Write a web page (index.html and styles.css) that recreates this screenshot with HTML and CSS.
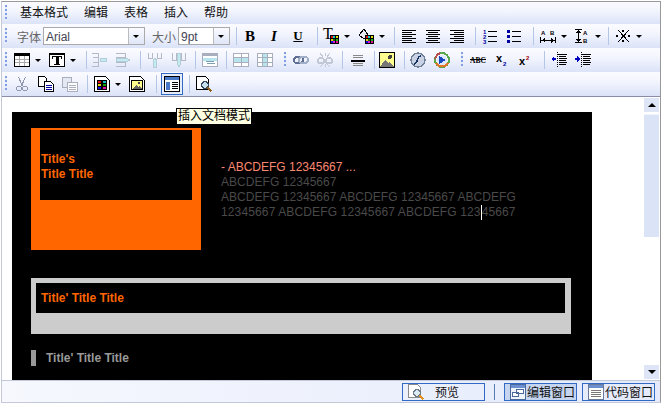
FILE: index.html
```html
<!doctype html>
<html lang="zh-CN">
<head>
    <meta charset="utf-8"/>
    <title>编辑器</title>
    <link rel="stylesheet" href="styles.css">
</head>
<body>

<svg class="defs" xmlns="http://www.w3.org/2000/svg">
    <symbol id="i-colors" viewBox="0 0 16 16">
        <path fill="#000" d="M7 7h9v9H7z"/>
        <path fill="#e01010" d="M8 8h2v2H8z"/><path fill="#10d0d0" d="M10 8h2v2h-2z"/><path fill="#e0e010" d="M13 8h2v2h-2z"/>
        <path fill="#f0d000" d="M8 11h2v2H8z"/><path fill="#107010" d="M10 11h2v2h-2z"/><path fill="#10c010" d="M13 11h2v2h-2z"/>
        <path fill="#1010e0" d="M8 13h2v2H8z"/><path fill="#e010e0" d="M10 13h2v2h-2z"/><path fill="#e01090" d="M13 13h2v2h-2z"/>
    </symbol>
    <symbol id="i-table" viewBox="0 0 16 16">
        <path fill="#fff" stroke="#000" d="M.5 1.500h15v13H.5z"/>
        <path fill="#000" d="M0 1h16v3H0z"/>
        <path stroke="#aaa" d="M1 7.500h14M1 10.500h14M5.500 4v10M10.500 4v10"/>
    </symbol>
    <symbol id="i-textbox" viewBox="0 0 16 16">
        <path fill="#fff" stroke="#000" d="M.5 1.500h15v13H.5z"/>
        <path fill="#000" d="M0 1h16v2H0z"/>
        <path fill="#000" d="M3 4h10v3h-1V5H9.500v7H11v1H5v-1h1.500V5H4v2H3z"/>
    </symbol>
    <symbol id="i-alignl" viewBox="0 0 16 16"><path stroke="#000" d="M1 2.500h14M1 4.500h10M1 6.500h14M1 8.500h10M1 10.500h14M1 12.500h10M1 14.500h14"/></symbol>
    <symbol id="i-alignc" viewBox="0 0 16 16"><path stroke="#000" d="M1 2.500h14M3 4.500h10M1 6.500h14M3 8.500h10M1 10.500h14M3 12.500h10M1 14.500h14"/></symbol>
    <symbol id="i-alignr" viewBox="0 0 16 16"><path stroke="#000" d="M1 2.500h14M5 4.500h10M1 6.500h14M5 8.500h10M1 10.500h14M5 12.500h10M1 14.500h14"/></symbol>
    <symbol id="i-ol" viewBox="0 0 16 16">
        <text class="tiny" x="1" y="6" fill="#0000a0">1</text><text class="tiny" x="1" y="11" fill="#0000a0">2</text><text class="tiny" x="1" y="16" fill="#0000a0">3</text>
        <path stroke="#000" d="M6 3.500h9M6 8.500h9M6 13.500h9"/>
    </symbol>
    <symbol id="i-ul" viewBox="0 0 16 16">
        <path fill="#0000a0" d="M1 2h3v3H1zM1 7h3v3H1zM1 12h3v3H1z"/>
        <path stroke="#000" d="M6 3.500h9M6 8.500h9M6 13.500h9"/>
    </symbol>
    <symbol id="i-hspace" viewBox="0 0 16 16">
        <text class="tiny" x="1" y="7" fill="#000">A</text><text class="tiny" x="10" y="7" fill="#000">B</text>
        <path stroke="#000" d="M.5 9v6M15.500 9v6M1 12.500h14"/><path fill="#000" d="M2 12l3-2v5zM14 12l-3-2v5z"/>
    </symbol>
    <symbol id="i-vspace" viewBox="0 0 16 16">
        <text class="tiny" x="9" y="7" fill="#000">A</text><text class="tiny" x="9" y="15" fill="#000">B</text>
        <path stroke="#000" d="M1 1.500h7M1 14.500h7M4.500 2v12"/><path fill="#000" d="M4 2L2 5h5zM4 14l-2-3h5z"/>
    </symbol>
    <symbol id="i-clear" viewBox="0 0 16 16">
        <path stroke="#000" d="M3 2l11 12M14 2L3 14"/>
        <path fill="#000" d="M1 7h2v2H1zM13 7h2v2h-2zM7 2h2v2H7zM7 12h2v2H7z"/>
    </symbol>
    <symbol id="i-splitl" viewBox="0 0 16 16">
        <path fill="none" stroke="#b4b9c8" d="M1 1.500h6v4H2M1 14.500h6v-4H2M7.500 5v6"/>
        <path fill="#c4eaf2" stroke="#b4ccd6" d="M15 6.500h-5L9 8l1 1.500h5z"/>
    </symbol>
    <symbol id="i-splitr" viewBox="0 0 16 16">
        <path fill="none" stroke="#b4b9c8" d="M1 1.500h9v4H1M1 14.500h9v-4H1"/>
        <path fill="#c4eaf2" stroke="#b4ccd6" d="M1 6.500h11L15 8l-3 1.500H1z"/>
    </symbol>
    <symbol id="i-splitu" viewBox="0 0 16 16">
        <path fill="none" stroke="#b4b9c8" d="M1.500 1v5h4V1M14.500 1v5h-4V1"/>
        <path fill="#c4eaf2" stroke="#b4ccd6" d="M6.500 15V8L8 6l1.500 2v7z"/>
    </symbol>
    <symbol id="i-splitd" viewBox="0 0 16 16">
        <path fill="none" stroke="#b4b9c8" d="M1.500 1v7h4V1M14.500 1v7h-4V1"/>
        <path fill="#c4eaf2" stroke="#b4ccd6" d="M6.500 1v11L8 15l1.500-3V1z"/>
    </symbol>
    <symbol id="i-tmove" viewBox="0 0 16 16">
        <path fill="#fff" stroke="#a8aebe" d="M.5 1.500h15v13H.5z"/>
        <path fill="#a8aebe" d="M1 2h14v2H1z"/>
        <path fill="#b8e4ee" d="M1 6h14v3H1z"/>
        <path stroke="#7fa0b0" d="M4 9.500h8M5 11.500h8"/>
    </symbol>
    <symbol id="i-trow" viewBox="0 0 16 16">
        <path fill="#fff" stroke="#a8aebe" d="M.5 1.500h15v13H.5z"/>
        <path fill="#b8e4ee" d="M1 6h14v4H1z"/>
        <path stroke="#a8aebe" d="M1 5.500h14M1 10.500h14M8.500 2v12"/>
    </symbol>
    <symbol id="i-tcol" viewBox="0 0 16 16">
        <path fill="#fff" stroke="#a8aebe" d="M.5 1.500h15v13H.5z"/>
        <path fill="#b8e4ee" d="M6 2h5v12H6z"/>
        <path stroke="#a8aebe" d="M1 5.500h14M1 10.500h14M5.500 2v12M10.500 2v12"/>
    </symbol>
    <symbol id="i-link" viewBox="0 0 16 16">
        <rect x="1" y="5" width="9" height="6" rx="3" fill="none" stroke="#5f6f94" stroke-width="2"/>
        <rect x="6" y="5" width="9" height="6" rx="3" fill="none" stroke="#a0aec8" stroke-width="2"/>
    </symbol>
    <symbol id="i-unlink" viewBox="0 0 16 16">
        <rect x="1" y="6" width="6" height="5" rx="2.500" fill="none" stroke="#c2c8d6" stroke-width="2"/>
        <rect x="9" y="6" width="6" height="5" rx="2.500" fill="none" stroke="#c2c8d6" stroke-width="2"/>
        <path stroke="#c2c8d6" d="M3 1l3 4M13 1l-3 4M3 15l3-3M13 15l-3-3M8 1v3M8 12v3"/>
    </symbol>
    <symbol id="i-hr" viewBox="0 0 16 16">
        <path stroke="#888" d="M3 3.500h10M3 5.500h10M3 11.500h10M3 13.500h10"/>
        <path fill="#000" d="M1 8h14v2H1z"/>
    </symbol>
    <symbol id="i-image" viewBox="0 0 16 16">
        <path fill="#ffff90" stroke="#000" d="M.5 .5h15v15H.5z"/>
        <circle cx="11" cy="5" r="2" fill="#444"/>
        <path fill="#777" d="M1 15l5-7 3 3 2-1 4 5z"/>
    </symbol>
    <symbol id="i-flash" viewBox="0 0 16 16">
        <circle cx="8" cy="8" r="7" fill="#c8d2e4" stroke="#6f7f98" stroke-width="1.500"/>
        <path fill="none" stroke="#14305c" stroke-width="1.500" d="M11 4C8 4 8 7 7 9s-1 3-3 3"/>
    </symbol>
    <symbol id="i-media" viewBox="0 0 16 16">
        <circle cx="8" cy="8" r="7" fill="none" stroke="#5aa84a" stroke-width="2"/>
        <path fill="none" stroke="#e07828" stroke-width="2" d="M2 11a7 7 0 0 0 12 0"/>
        <path fill="none" stroke="#b85050" stroke-width="2" d="M1.300 7A7 7 0 0 1 6 1.300"/>
        <circle cx="8" cy="8" r="5" fill="#dfe8f8"/>
        <path fill="#1848c0" d="M5 4l7 4-7 4z"/>
    </symbol>
    <symbol id="i-outdent" viewBox="0 0 16 16">
        <path stroke="#000" stroke-dasharray="1 1" d="M6.500 0v16"/>
        <path stroke="#000" d="M7 2.500h9M8 4.500h7M8 6.500h8M8 8.500h7M8 10.500h8M8 12.500h7"/>
        <path fill="#0000c0" d="M0 7l3-3v2h2v2H3v2z"/>
    </symbol>
    <symbol id="i-indent" viewBox="0 0 16 16">
        <path stroke="#000" stroke-dasharray="1 1" d="M6.500 0v16"/>
        <path stroke="#000" d="M7 2.500h9M8 4.500h7M8 6.500h8M8 8.500h7M8 10.500h8M8 12.500h7"/>
        <path fill="#0000c0" d="M5 7L2 4v2H0v2h2v2z"/>
    </symbol>
    <symbol id="i-cut" viewBox="0 0 16 16">
        <path fill="none" stroke="#8e97ad" d="M4.500 1l4 9M11.500 1l-4 9"/>
        <circle cx="5" cy="12.500" r="2.500" fill="none" stroke="#8e97ad"/>
        <circle cx="11" cy="12.500" r="2.500" fill="none" stroke="#8e97ad"/>
    </symbol>
    <symbol id="i-copy" viewBox="0 0 16 16">
        <path fill="#fff" stroke="#000" d="M.5 .5h6l2 2v8h-8z"/>
        <path fill="#fff" stroke="#000" d="M6.500 5.500h6l3 3v7h-9z"/>
        <path stroke="#0000a0" d="M8 9.500h6M8 11.500h6M8 13.500h6"/>
    </symbol>
    <symbol id="i-paste" viewBox="0 0 16 16">
        <path fill="#e4e8f2" stroke="#a8aebe" d="M.5 1.500h9v10h-9z"/>
        <path fill="#fff" stroke="#a8aebe" d="M5.500 6.500h10v9h-10z"/>
        <path stroke="#a8aebe" d="M7 9.500h7M7 11.500h7M7 13.500h7"/>
    </symbol>
    <symbol id="i-doccolor" viewBox="0 0 16 16">
        <path fill="#fff" stroke="#000" d="M.5 .5h11l4 4v11H.5z"/>
        <path fill="#000" d="M3 4h10v10H3z"/>
        <path fill="#e01010" d="M4 5h3v2H4z"/><path fill="#10c0c0" d="M9 5h3v2H9z"/>
        <path fill="#e0d010" d="M4 8h3v2H4z"/><path fill="#10a010" d="M9 8h3v2H9z"/>
        <path fill="#1010e0" d="M4 11h3v2H4z"/><path fill="#e010a0" d="M9 11h3v2H9z"/>
    </symbol>
    <symbol id="i-docimage" viewBox="0 0 16 16">
        <path fill="#fff" stroke="#000" d="M.5 .5h11l4 4v11H.5z"/>
        <path fill="#ffff90" stroke="#000" d="M2.500 4.500h11v9h-11z"/>
        <circle cx="10" cy="7" r="1.500" fill="#444"/>
        <path fill="#666" d="M3 13l4-4 2 2 1-1 3 3z"/>
    </symbol>
    <symbol id="i-docmode" viewBox="0 0 16 16">
        <path fill="#fff" stroke="#000" d="M.5 .5h15v15H.5z"/>
        <path fill="#4878c8" d="M1 1h14v3H1zM2 6h4v8H2z"/>
        <path stroke="#000" d="M8 6.500h6M8 8.500h6M8 10.500h6M8 12.500h6"/>
    </symbol>
    <symbol id="i-preview" viewBox="0 0 16 16">
        <path fill="#fff" stroke="#000" d="M.5 .5h9l3 3v10H.5z"/>
        <circle cx="9" cy="9" r="3.500" fill="#c8e0f0" stroke="#304a60" stroke-width="1.500"/>
        <path stroke="#906020" stroke-width="2" d="M11.500 11.500l4 4"/>
    </symbol>
    <symbol id="i-prevgray" viewBox="0 0 16 16">
        <path fill="#fff" stroke="#8a8a8a" d="M.5 .5h9l3 3v10H.5z"/>
        <circle cx="9" cy="9" r="3.500" fill="#dceaf4" stroke="#6a7a88" stroke-width="1.500"/>
        <path stroke="#e09020" stroke-width="2" d="M11.500 11.500l4 4"/>
    </symbol>
    <symbol id="i-winedit" viewBox="0 0 16 16">
        <path fill="#eef3fc" stroke="#4a6a9c" d="M.5 .5h15v15H.5z"/>
        <path fill="#6a90d0" d="M1 1h14v3H1z"/>
        <path fill="#fff" stroke="#4a6a9c" d="M2.500 8.500h6v4h-6zM6.500 5.500h7v4h-7z"/>
    </symbol>
    <symbol id="i-wincode" viewBox="0 0 16 16">
        <path fill="#fff" stroke="#6a7a98" d="M.5 .5h15v15H.5z"/>
        <path fill="#6a90d0" d="M1 1h14v3H1z"/>
        <path stroke="#777" d="M3 6.500h10M3 8.500h10M3 10.500h10M3 12.500h10"/>
    </symbol>
</svg>

<div class="editor">

    <div class="bar bar-menu">
        <i class="grip"></i>
        <span class="menu">基本格式</span>
        <span class="menu">编辑</span>
        <span class="menu">表格</span>
        <span class="menu">插入</span>
        <span class="menu">帮助</span>
    </div>

    <div class="bar">
        <i class="grip"></i>
        <span class="lbl lbl-first">字体</span>
        <div class="sel sel-font"><span>Arial</span><b></b></div>
        <span class="lbl">大小</span>
        <div class="sel sel-size"><span>9pt</span><b></b></div>
        <i class="sep l6 r1"></i>
        <span class="btn fmt fmt-b">B</span>
        <span class="btn fmt fmt-i">I</span>
        <span class="btn fmt fmt-u">U</span>
        <i class="sep l7 r1"></i>
        <span class="btn"><svg class="ic"><text class="serif" x="0" y="11">T</text><use href="#i-colors"/></svg></span><i class="arrow"></i>
        <span class="btn"><svg class="ic"><path fill="#e8e8f0" stroke="#000" d="M1 7l5-6 4 6-4 4z"/><use href="#i-colors"/></svg></span><i class="arrow"></i>
        <i class="sep l5 r2"></i>
        <span class="btn"><svg class="ic"><use href="#i-alignl"/></svg></span>
        <span class="btn"><svg class="ic"><use href="#i-alignc"/></svg></span>
        <span class="btn"><svg class="ic"><use href="#i-alignr"/></svg></span>
        <i class="sep l6 r2"></i>
        <span class="btn"><svg class="ic"><use href="#i-ol"/></svg></span>
        <span class="btn"><svg class="ic"><use href="#i-ul"/></svg></span>
        <i class="sep l7 r2"></i>
        <span class="btn"><svg class="ic"><use href="#i-hspace"/></svg></span><i class="arrow arrow-s"></i>
        <span class="btn"><svg class="ic"><use href="#i-vspace"/></svg></span><i class="arrow arrow-s"></i>
        <i class="sep l4 r2"></i>
        <span class="btn"><svg class="ic"><use href="#i-clear"/></svg></span><i class="arrow"></i>
    </div>

    <div class="bar">
        <i class="grip"></i>
        <span class="btn"><svg class="ic"><use href="#i-table"/></svg></span><i class="arrow"></i>
        <span class="btn"><svg class="ic"><use href="#i-textbox"/></svg></span><i class="arrow"></i>
        <i class="sep l6 r0"></i>
        <span class="btn"><svg class="ic"><use href="#i-splitl"/></svg></span>
        <span class="btn"><svg class="ic"><use href="#i-splitr"/></svg></span>
        <i class="sep l5 r2"></i>
        <span class="btn"><svg class="ic"><use href="#i-splitu"/></svg></span>
        <span class="btn"><svg class="ic"><use href="#i-splitd"/></svg></span>
        <i class="sep l4 r2"></i>
        <span class="btn"><svg class="ic"><use href="#i-tmove"/></svg></span>
        <i class="sep l4 r2"></i>
        <span class="btn"><svg class="ic"><use href="#i-trow"/></svg></span>
        <span class="btn"><svg class="ic"><use href="#i-tcol"/></svg></span>
        <i class="grip grip-mid"></i>
        <span class="btn"><svg class="ic"><use href="#i-link"/></svg></span>
        <span class="btn"><svg class="ic"><use href="#i-unlink"/></svg></span>
        <i class="sep l5 r3"></i>
        <span class="btn"><svg class="ic"><use href="#i-hr"/></svg></span>
        <i class="sep l4 r0"></i>
        <span class="btn"><svg class="ic"><use href="#i-image"/></svg></span>
        <i class="sep l5 r1"></i>
        <span class="btn"><svg class="ic"><use href="#i-flash"/></svg></span>
        <span class="btn"><svg class="ic"><use href="#i-media"/></svg></span>
        <i class="grip grip-mid"></i>
        <span class="btn"><svg class="ic"><text class="abc" x="0" y="11">ABC</text><path stroke="#000" d="M0 7.500h16"/></svg></span>
        <span class="btn"><svg class="ic"><text class="xx" x="2" y="10">x</text><text class="idx" x="9" y="14" fill="#0000a0">2</text></svg></span>
        <span class="btn"><svg class="ic"><text class="xx" x="1" y="13">x</text><text class="idx" x="8" y="8" fill="#a00000">2</text></svg></span>
        <i class="sep l6 r2"></i>
        <span class="btn"><svg class="ic"><use href="#i-outdent"/></svg></span>
        <span class="btn"><svg class="ic"><use href="#i-indent"/></svg></span>
    </div>

    <div class="bar">
        <i class="grip"></i>
        <span class="btn"><svg class="ic"><use href="#i-cut"/></svg></span>
        <span class="btn"><svg class="ic"><use href="#i-copy"/></svg></span>
        <span class="btn"><svg class="ic"><use href="#i-paste"/></svg></span>
        <i class="sep l5 r2"></i>
        <span class="btn"><svg class="ic"><use href="#i-doccolor"/></svg></span><i class="arrow"></i>
        <span class="btn"><svg class="ic"><use href="#i-docimage"/></svg></span>
        <i class="sep l7 r3"></i>
        <span class="btn btn-on"><svg class="ic"><use href="#i-docmode"/></svg></span>
        <i class="sep l5 r2"></i>
        <span class="btn"><svg class="ic"><use href="#i-preview"/></svg></span>
    </div>

    <div class="pane">
        <div class="canvas">
            <div class="sheet">
                <div class="feature">
                    <div class="thumb">
                        <div class="thumb-in">Title's<br>Title Title</div>
                    </div>
                    <div class="intro">
                        <div class="intro-top">- ABCDEFG 12345667 ...</div>
                        ABCDEFG 12345667<br>
                        ABCDEFG 12345667 ABCDEFG 12345667 ABCDEFG
                        <span class="intro-wide">12345667 ABCDEFG 12345667 ABCDEFG 123<i class="caret"></i>45667</span>
                    </div>
                </div>
                <div class="band">
                    <div class="band-in">Title' Title Title</div>
                </div>
                <div class="subhead">Title' Title Title</div>
            </div>
        </div>
        <div class="scroll">
            <div class="sb-btn"><i class="up"></i></div>
            <div class="sb-thumb"></div>
            <div class="sb-track"></div>
            <div class="sb-btn"><i class="down"></i></div>
        </div>
    </div>

    <div class="status">
        <span class="tab tab-preview"><svg class="ic"><use href="#i-prevgray"/></svg><span class="tab-wide">预览</span></span>
        <i class="status-sep"></i>
        <span class="tab tab-on"><svg class="ic"><use href="#i-winedit"/></svg>编辑窗口</span>
        <span class="tab"><svg class="ic"><use href="#i-wincode"/></svg>代码窗口</span>
    </div>

    <div class="tip">插入文档模式</div>
</div>

</body>
</html>
```

FILE: styles.css
```css
body {
    margin: 0;
    background: #fff;
    font-family: "Liberation Sans", "Noto Sans CJK SC", sans-serif;
    font-size: 12px;
}

.defs {
    display: none;
}

.editor {
    position: relative;
    width: 660px;
    height: 402px;
    margin: 1px 0 0 1px;
    box-sizing: border-box;
    border: 1px solid #c4c9da;
    border-top-color: #999;
    border-right-color: #999;
    display: flex;
    flex-direction: column;
    overflow: hidden;
}

/* toolbars */
.bar {
    height: 24px;
    flex: none;
    display: flex;
    align-items: center;
    padding-left: 3px;
    background: linear-gradient(#fafbff, #f3f5fe 40%, #dbe3f8);
}

.bar-menu {
    height: 22px;
}

.grip {
    width: 2px;
    height: 16px;
    flex: none;
    margin-right: 3px;
    background: repeating-linear-gradient(#7f9fe2 0, #7f9fe2 2px, #e6ecfb 2px, #e6ecfb 4px);
}

.grip-mid {
    margin: 0 3px 0 7px;
}

.menu {
    margin-left: 10px;
    margin-right: 6px;
    color: #111;
    line-height: 20px;
}

.lbl {
    width: 24px;
    margin: 0 2px 0 7px;
    color: #666;
}

.lbl-first {
    margin-left: 7px;
}

.sel {
    height: 18px;
    box-sizing: border-box;
    border: 1px solid #aaa;
    background: #fff;
    display: flex;
    color: #445;
    line-height: 19px;
}

.sel span {
    flex: 1;
    padding-left: 2px;
}

.sel b {
    width: 15px;
    border-left: 1px solid #bbb;
    background: linear-gradient(#fafbff, #dfe6f8);
    position: relative;
}

.sel b::after {
    content: "";
    position: absolute;
    left: 4px;
    top: 7px;
    border: 3px solid transparent;
    border-top-color: #000;
    border-bottom: 0;
}

.sel-font {
    width: 102px;
}

.sel-size {
    width: 52px;
}

.sep {
    width: 1px;
    height: 18px;
    flex: none;
    background: #b3c6ea;
}

.l4 { margin-left: 4px; }
.l5 { margin-left: 5px; }
.l6 { margin-left: 6px; }
.l7 { margin-left: 7px; }
.r0 { margin-right: 0; }
.r1 { margin-right: 1px; }
.r2 { margin-right: 2px; }
.r3 { margin-right: 3px; }

.btn {
    width: 24px;
    height: 24px;
    flex: none;
    box-sizing: border-box;
    display: flex;
    align-items: center;
    justify-content: center;
}

.btn-on {
    width: 22px;
    height: 22px;
    margin: 0 1px;
    border: 1px solid #316ac5;
    background: #e6ecfa;
}

.ic {
    width: 16px;
    height: 16px;
    flex: none;
    overflow: visible;
    shape-rendering: crispEdges;
}

.arrow {
    width: 11px;
    height: 24px;
    flex: none;
    position: relative;
}

.arrow-s {
    width: 10px;
}

.arrow::after {
    content: "";
    position: absolute;
    left: 1px;
    top: 11px;
    border: 3px solid transparent;
    border-top-color: #000;
    border-bottom: 0;
}

.fmt {
    font-family: "Liberation Serif", serif;
    font-size: 15px;
    font-weight: bold;
    color: #000;
}

.fmt-i {
    font-style: italic;
}

.fmt-u {
    text-decoration: underline;
    font-size: 13px;
}

.tiny {
    font: bold 6px "Liberation Sans", sans-serif;
}

.serif {
    font: 16px "Liberation Serif", serif;
}

.abc {
    font: bold 7.500px "Liberation Serif", serif;
}

.xx {
    font: bold 11px "Liberation Sans", sans-serif;
}

.idx {
    font: bold 6px "Liberation Sans", sans-serif;
}

/* editing area */
.pane {
    flex: 1;
    min-height: 0;
    display: flex;
    border-top: 1px solid #8a8ca8;
    background: #fff;
}

.canvas {
    flex: 1;
    min-width: 0;
    overflow: hidden;
    padding: 15px 0 0 10px;
}

.sheet {
    width: 580px;
    height: 320px;
    box-sizing: border-box;
    padding: 16px 19px;
    background: #000;
}

.feature {
    display: flex;
    align-items: center;
}

.thumb {
    width: 170px;
    height: 122px;
    box-sizing: border-box;
    padding: 2px 9px 0;
    background: #f60;
}

.thumb-in {
    height: 70px;
    box-sizing: border-box;
    padding: 22px 0 0 1px;
    background: #000;
    color: #f60;
    font-weight: bold;
    line-height: 15px;
}

.intro {
    width: 310px;
    margin-left: 20px;
    padding-top: 2px;
    color: #4a4a4a;
    line-height: 15px;
    letter-spacing: 0.05px;
}

.intro-top {
    color: #fa8872;
    letter-spacing: 0;
}

.intro-wide {
    letter-spacing: 0.13px;
}

.caret {
    display: inline-block;
    width: 1px;
    height: 15px;
    vertical-align: top;
    background: #fff;
}

.band {
    width: 540px;
    height: 56px;
    box-sizing: border-box;
    margin-top: 28px;
    padding: 5px 6px 0 5px;
    background: #ccc;
}

.band-in {
    height: 30px;
    padding-left: 5px;
    background: #000;
    color: #f60;
    font-weight: bold;
    line-height: 31px;
}

.subhead {
    margin-top: 16px;
    padding-left: 10px;
    border-left: 5px solid #999;
    color: #999;
    font-weight: bold;
    line-height: 16px;
}

.scroll {
    width: 15px;
    flex: none;
    display: flex;
    flex-direction: column;
    padding: 1px 1px 1px 0;
}

.sb-btn {
    height: 14px;
    flex: none;
    background: #dde5f6;
    display: flex;
    align-items: center;
    justify-content: center;
}

.sb-thumb {
    height: 122px;
    flex: none;
    margin-top: 2px;
    background: #dbe4f6;
    border-top: 1px solid #f0f4fc;
}

.sb-track {
    flex: 1;
}

.up {
    border: 4px solid transparent;
    border-bottom-color: #000;
    border-top: 0;
}

.down {
    border: 4px solid transparent;
    border-top-color: #000;
    border-bottom: 0;
}

/* bottom bar */
.status {
    height: 21px;
    flex: none;
    display: flex;
    align-items: center;
    justify-content: flex-end;
    gap: 5px;
    padding-right: 5px;
    border-top: 1px solid #c4c9da;
    background: linear-gradient(90deg, #f6f8fe, #e4eafb);
}

.tab {
    width: 73px;
    height: 18px;
    box-sizing: border-box;
    border: 1px solid #316ac5;
    display: flex;
    align-items: center;
    gap: 1px;
    padding-left: 5px;
    color: #111;
}

.tab-preview {
    width: 83px;
    margin-right: 4px;
}

.tab-wide {
    margin-left: 10px;
}

.tab-on {
    background: #c5d5ef;
}

.status-sep {
    width: 1px;
    height: 16px;
    margin-right: 4px;
    background: #5a7ab0;
}

.tip {
    position: absolute;
    left: 174px;
    top: 106px;
    width: 76px;
    height: 17px;
    box-sizing: border-box;
    border: 1px solid #000;
    background: #ffffe1;
    color: #000;
    text-align: center;
    line-height: 15px;
    white-space: nowrap;
}
```
